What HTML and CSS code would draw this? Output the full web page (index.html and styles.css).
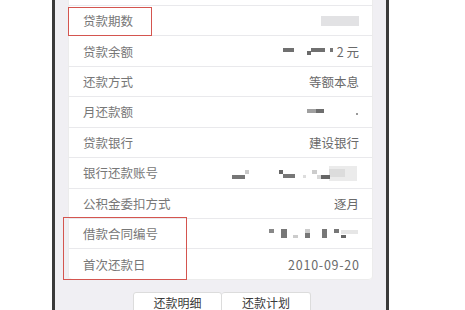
FILE: index.html
```html
<!DOCTYPE html>
<html lang="zh-CN">
<head>
<meta charset="utf-8">
<title>贷款信息</title>
<link rel="stylesheet" href="styles.css">
</head>
<body>
<div class="phone">
  <div class="card">
    <div class="row row-top"><span class="label"></span><span class="value"></span></div>
    <div class="row"><span class="label">贷款期数</span>
      <svg class="mask" width="40" height="12" viewBox="0 0 40 12"><rect x="2" y="1" width="38" height="10" fill="#e2e2e4"/></svg>
    </div>
    <div class="row"><span class="label">贷款余额</span>
      <span class="value"><svg class="mask" width="52" height="10" viewBox="0 0 52 10"><rect x="0" y="2" width="11" height="4" fill="#707070"/><rect x="24" y="5" width="4" height="4" fill="#6a6a6a"/><rect x="28" y="2" width="14" height="4" fill="#707070"/><rect x="47" y="2" width="3" height="4" fill="#777"/></svg>2 元</span>
    </div>
    <div class="row"><span class="label">还款方式</span><span class="value">等额本息</span></div>
    <div class="row"><span class="label">月还款额</span>
      <svg class="mask" width="52" height="10" viewBox="0 0 52 10"><rect x="0" y="2" width="9" height="4" fill="#a0a0a0"/><rect x="9" y="2" width="8" height="4" fill="#6e6e6e"/><rect x="49" y="6" width="2" height="2" fill="#999"/></svg>
    </div>
    <div class="row"><span class="label">贷款银行</span><span class="value">建设银行</span></div>
    <div class="row"><span class="label">银行还款账号</span>
      <svg class="mask" width="128" height="16" viewBox="0 0 128 16"><rect x="1" y="10" width="13" height="4" fill="#767676"/><rect x="14" y="5" width="4" height="4" fill="#c8c8c8"/><rect x="48" y="5" width="4" height="4" fill="#666"/><rect x="52" y="9" width="12" height="4" fill="#777"/><rect x="72" y="10" width="3" height="3" fill="#ddd"/><rect x="81" y="5" width="5" height="4" fill="#ccc"/><rect x="86" y="10" width="4" height="4" fill="#d8d8d8"/><rect x="98" y="1" width="28" height="15" fill="#ebebeb"/><rect x="98" y="4" width="16" height="8" fill="#dcdcdc"/><rect x="90" y="10" width="9" height="4" fill="#666"/></svg>
    </div>
    <div class="row"><span class="label">公积金委扣方式</span><span class="value">逐月</span></div>
    <div class="row"><span class="label">借款合同编号</span>
      <svg class="mask" width="90" height="14" viewBox="0 0 90 14"><rect x="0" y="2" width="5" height="4" fill="#888"/><rect x="12" y="2" width="6" height="9" fill="#777"/><rect x="24" y="8" width="5" height="3" fill="#ccc"/><rect x="36" y="2" width="5" height="4" fill="#ccc"/><rect x="36" y="6" width="5" height="5" fill="#777"/><rect x="53" y="2" width="5" height="9" fill="#777"/><rect x="72" y="3" width="17" height="4" fill="#e6e6e6"/><rect x="65" y="2" width="5" height="4" fill="#777"/><rect x="72" y="8" width="5" height="3" fill="#666"/></svg>
    </div>
    <div class="row row-last"><span class="label">首次还款日</span><span class="value date">2010-09-20</span></div>
  </div>
  <div class="tabs">
    <div class="tab">还款明细</div>
    <div class="tab">还款计划</div>
  </div>
</div>
<div class="mark mark-one"></div>
<div class="mark mark-two"></div>
</body>
</html>
```
FILE: styles.css
```css
* { box-sizing: border-box; }
html, body {
  margin: 0;
  padding: 0;
  background: #ffffff;
  width: 465px;
  height: 310px;
  overflow: hidden;
  font-family: "Noto Sans CJK SC", "Noto Sans", sans-serif;
}
body { position: relative; }
.phone {
  margin-left: 52px;
  width: 337px;
  height: 310px;
  background: #f0eff3;
  border-left: 3px solid #3a3a3a;
  border-right: 3px solid #3a3a3a;
  padding: 0 13px;
  overflow: hidden;
}
.card {
  margin-top: -24.5px;
  background: #ffffff;
  border-radius: 0 0 4px 4px;
  border-left: 1px solid #ececec;
  border-right: 1px solid #ececec;
}
.row {
  height: 30.45px;
  border-bottom: 1px solid #e9e9ec;
  display: flex;
  align-items: center;
  justify-content: space-between;
  padding: 0 13px 0 14px;
  font-size: 12.5px;
  color: #757575;
}
.row-last { border-bottom: 1px solid #ececec; border-radius: 0 0 4px 4px; }
.label { color: #777777; }
.value { color: #6a6a6a; display: flex; align-items: center; }
.date { letter-spacing: 0.75px; margin-right: -0.75px; }
.mask { display: block; }
.value .mask { margin-right: 2px; }
.tabs {
  display: flex;
  justify-content: center;
  margin-top: 12px;
  padding-left: 3px;
}
.tab {
  width: 89px;
  height: 30px;
  background: #ffffff;
  border: 1px solid #dcdcdc;
  border-radius: 3px 3px 0 0;
  text-align: center;
  font-size: 12px;
  line-height: 20px;
  color: #3a3a3a;
}
.tab + .tab { border-left: none; }
.mark {
  position: absolute;
  border: 1.5px solid #d4554f;
}
.mark-one { left: 68px; top: 7px; width: 84px; height: 29px; }
.mark-two { left: 63px; top: 217px; width: 124px; height: 63px; }
```
